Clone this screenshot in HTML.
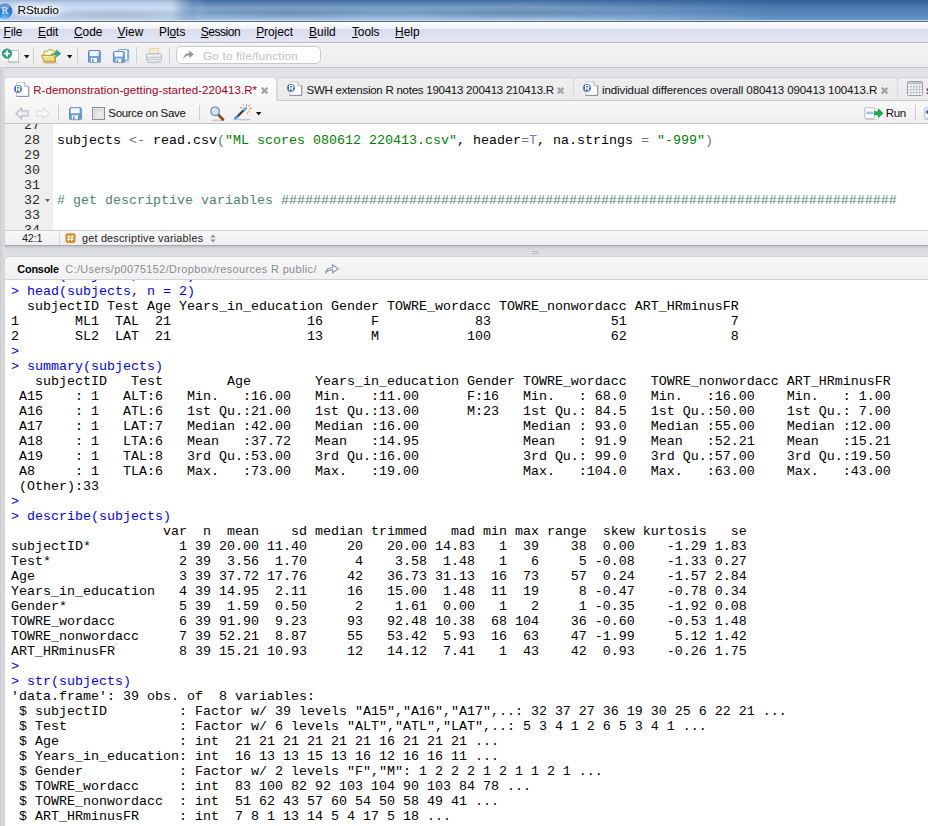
<!DOCTYPE html>
<html><head><meta charset="utf-8"><title>RStudio</title>
<style>
*{box-sizing:border-box;margin:0;padding:0}
html,body{width:928px;height:826px;overflow:hidden;background:#e2e3e7;font-family:"Liberation Sans",sans-serif;font-size:12px;color:#000}
.abs{position:absolute;white-space:nowrap}
svg{position:absolute;overflow:visible}
#title{left:0;top:0;width:928px;height:21px;overflow:hidden;background:linear-gradient(180deg,#31609a 0%,#3b6ba2 14%,#4f7fb3 42%,#5484b7 65%,#6a9bce 100%)}
#menu{left:0;top:21px;width:928px;height:22px;background:linear-gradient(180deg,#ffffff 0%,#fafbfd 12%,#eceff8 34%,#dadded 36%,#dde1f0 70%,#e3e7f4 100%);border-top:1px solid #56667b;border-bottom:1px solid #b6b9c9}
#menu u{text-decoration:underline}
#tool{left:0;top:43px;width:928px;height:25px;background:linear-gradient(180deg,#f2f2f3,#f0f0f1 50%,#ececee);border-top:1px solid #fcfcfd;border-bottom:1px solid #c3c3c5}
#search{left:176px;top:46px;width:145px;height:18px;border:1px solid #cacacd;border-radius:5px;background:#fff}
.sep{position:absolute;width:1px;background:#cfcfd1}
#tabline{left:0;top:100px;width:928px;height:1px;background:#c9c9cb}
.tab{position:absolute;top:77px;height:24px;border:1px solid #d2d2d5;border-left-color:#dbdbde;border-bottom:1px solid #c9c9cb;border-radius:4px 4px 0 0;background:linear-gradient(180deg,#eeeeef,#e9e9eb)}
.tab.act{background:linear-gradient(180deg,#fbfbfc,#f7f7f8);border-color:#dadadd;border-bottom:none;height:25px}
#etool{left:4px;top:101px;width:924px;height:23px;background:linear-gradient(180deg,#f7f7f8,#f4f4f5 60%,#efeff1);border-bottom:1px solid #c4c4c6;border-left:1px solid #d6d6d8}
#editor{left:4px;top:124px;width:924px;height:106px;background:#fff;overflow:hidden;border-left:1px solid #d6d6d8}
#gutter{left:0;top:0;width:48px;height:106px;background:#efeff0}
.mono{font-family:"Liberation Mono",monospace;font-size:13.333px;line-height:15px}
.mono div{white-space:pre}
#status{left:4px;top:230px;width:924px;height:16px;background:linear-gradient(180deg,#f8f8f9,#efeff1);border-top:1px solid #c9d2d0;border-bottom:1px solid #a9a9ab;border-left:1px solid #d0d0d2}
#split{left:5px;top:246px;width:923px;height:11px;background:linear-gradient(180deg,#bfc0c3 0%,#d4d5d8 18%,#dcdde1 40%,#dfe0e4 100%)}
#chead{left:4px;top:256px;width:924px;height:24px;background:linear-gradient(180deg,#f8f8f9,#f0f0f2);border:1px solid #d2d2d4;border-right:none;border-bottom:1px solid #d2d2d4;border-radius:5px 0 0 0}
#console{left:4px;top:280px;width:924px;height:546px;background:#fff;border-left:1px solid #d2d2d4;overflow:hidden}
#ctext{left:6px;top:-11px}
#ctext .cmd{color:#0000ff;height:15px}
#ctext .out{color:#000;height:15px}
.ln{position:absolute;left:1px;width:34px;text-align:right;color:#2a2a2a}
.code{position:absolute;left:52px}
.s{color:#008000}.c{color:#4c886b}.o{color:#687687}.k{color:#6d79de}
</style></head><body>
<svg width="0" height="0" style="left:-10px;top:-10px"><defs>
<linearGradient id="gPage" x1="0" y1="0" x2="1" y2="1"><stop offset="0" stop-color="#ffffff"/><stop offset="1" stop-color="#e9eaee"/></linearGradient>
<linearGradient id="gSave" x1="0" y1="0" x2="0" y2="1"><stop offset="0" stop-color="#78abe6"/><stop offset="1" stop-color="#6099dd"/></linearGradient>
<linearGradient id="gFold" x1="0" y1="0" x2="0" y2="1"><stop offset="0" stop-color="#fbeeb6"/><stop offset="1" stop-color="#e9c75e"/></linearGradient>
<linearGradient id="gChk" x1="0" y1="0" x2="1" y2="1"><stop offset="0" stop-color="#d4d5d6"/><stop offset="1" stop-color="#f8f8f8"/></linearGradient>
<radialGradient id="gSph" cx=".5" cy=".92" r=".95"><stop offset="0" stop-color="#62c4f4"/><stop offset=".4" stop-color="#2f83dc"/><stop offset="1" stop-color="#2b5fb4"/></radialGradient>
<g id="rdoc">
 <path d="M2.6 0.7h8.2l3.9 3.9v9.8H2.6z" fill="#fefefe" stroke="#c5c8ce" stroke-width="0.9"/>
 <path d="M14.7 4.6v9.8H2.6" fill="none" stroke="#858c98" stroke-width="1"/>
 <path d="M10.8 0.7v3.9h3.9" fill="#f3f4f7" stroke="#9a9fa9" stroke-width="0.8"/>
 <circle cx="4" cy="6.9" r="3.9" fill="#3b72b6"/>
 <path d="M2.6 9.6V4.3h1.7c1.1 0 1.7.55 1.7 1.4S5.4 7.1 4.3 7.1H2.6M4.3 7.1l1.8 2.5" fill="none" stroke="#fff" stroke-width="1.25"/>
</g>
<g id="save">
 <rect x="0.5" y="0.5" width="11.8" height="11.5" rx="1" fill="url(#gSave)" stroke="#5c88c0" stroke-width="1"/>
 <rect x="1.7" y="1.1" width="8.9" height="4.8" fill="#ffffff"/>
 <rect x="2.6" y="2.3" width="7.1" height="1.6" fill="#eef1f5"/>
 <rect x="2.8" y="8.1" width="6.2" height="3.9" fill="#ffffff"/>
 <rect x="3.9" y="9.2" width="1.8" height="2.8" fill="#5e97dc"/>
</g>
<g id="saveb">
 <rect x="0.5" y="0.5" width="10.6" height="11" rx="1" fill="#7cc0e6" stroke="#6aa6cf" stroke-width="0.9"/>
 <rect x="1.4" y="1" width="8" height="9.6" fill="#fbfdfe"/>
</g>
<g id="xx"><path d="M0.8 0.8l5.4 5.4M6.2 0.8l-5.4 5.4" stroke="#a2a2a4" stroke-width="2.2" fill="none"/></g>
<g id="dd"><path d="M0 0h5.4l-2.7 3.4z" fill="#111"/></g>
</defs></svg>
<div id="title" class="abs">
<div class="abs" style="left:180px;top:0;width:600px;height:20px;background:linear-gradient(180deg,rgba(235,243,252,.08) 0%,rgba(235,243,252,.16) 15%,rgba(235,243,252,.30) 40%,rgba(235,243,252,.24) 65%,rgba(235,243,252,.46) 100%);-webkit-mask-image:linear-gradient(90deg,transparent 0,#000 20px,#000 360px,rgba(0,0,0,.6) 450px,rgba(0,0,0,.25) 540px,transparent 600px);mask-image:linear-gradient(90deg,transparent 0,#000 20px,#000 360px,rgba(0,0,0,.6) 450px,rgba(0,0,0,.25) 540px,transparent 600px)"></div>
<div class="abs" style="left:0;top:0;width:210px;height:20px;background:linear-gradient(180deg,#9fb6d4 0%,#b9cee7 14%,#c8dcf2 35%,#c4d8ef 50%,#b9cce3 68%,#bcd1ea 100%);-webkit-mask-image:linear-gradient(90deg,#000 0,#000 172px,rgba(0,0,0,.25) 192px,transparent 208px);mask-image:linear-gradient(90deg,#000 0,#000 172px,rgba(0,0,0,.25) 192px,transparent 208px)"></div>
<div class="abs" style="left:40px;top:8px;width:150px;height:11px;background:radial-gradient(ellipse at 50% 60%,rgba(150,168,195,.45),rgba(150,168,195,0) 70%)"></div>
<div class="abs" style="left:200px;top:6px;width:180px;height:12px;background:radial-gradient(ellipse at 50% 60%,rgba(90,120,165,.35),rgba(90,120,165,0) 70%)"></div>
<div class="abs" style="left:400px;top:6px;width:240px;height:12px;background:radial-gradient(ellipse at 50% 60%,rgba(70,105,155,.35),rgba(70,105,155,0) 70%)"></div>
<div class="abs" style="left:0;top:20px;width:928px;height:1px;background:linear-gradient(90deg,#e6eef9 0,#dfeaf7 180px,#c9dbf0 300px,#c3d7ee 928px)"></div>
<div class="abs" style="left:10px;top:2px;width:60px;height:17px;background:radial-gradient(ellipse at 50% 50%,rgba(240,246,252,.85),rgba(240,246,252,0) 72%)"></div>
<svg style="left:-3px;top:3px" width="16" height="16" viewBox="0 0 16 16"><circle cx="7.7" cy="8.1" r="7.7" fill="url(#gSph)"/><ellipse cx="7.7" cy="3.9" rx="5.2" ry="2.9" fill="#ffffff" opacity=".3"/><text x="4.4" y="11.4" font-family="Liberation Serif,serif" font-size="10.2" fill="#f4f9ff">R</text></svg>
<span class="abs" style="left:17.5px;top:3px;font-size:11.8px;letter-spacing:-0.097px;color:#000;text-shadow:0 0 5px #fff,0 0 7px #fff,0 0 9px rgba(255,255,255,.9);">RStudio</span>
</div>
<div id="menu" class="abs">
<span class="abs" style="left:3.5px;top:3px;font-size:11.9px;letter-spacing:-0.094px"><u>F</u>ile</span>
<span class="abs" style="left:38px;top:3px;font-size:11.9px;letter-spacing:-0.052px"><u>E</u>dit</span>
<span class="abs" style="left:74px;top:3px;font-size:11.9px;letter-spacing:-0.037px"><u>C</u>ode</span>
<span class="abs" style="left:117.5px;top:3px;font-size:11.9px;letter-spacing:0.055px"><u>V</u>iew</span>
<span class="abs" style="left:159px;top:3px;font-size:11.9px;letter-spacing:-0.031px">Pl<u>o</u>ts</span>
<span class="abs" style="left:200.8px;top:3px;font-size:11.9px;letter-spacing:-0.405px"><u>S</u>ession</span>
<span class="abs" style="left:256.2px;top:3px;font-size:11.9px;letter-spacing:-0.034px"><u>P</u>roject</span>
<span class="abs" style="left:309px;top:3px;font-size:11.9px;letter-spacing:0.067px"><u>B</u>uild</span>
<span class="abs" style="left:352px;top:3px;font-size:11.9px;letter-spacing:-0.096px"><u>T</u>ools</span>
<span class="abs" style="left:395px;top:3px;font-size:11.9px;letter-spacing:0.081px"><u>H</u>elp</span>
</div>
<div id="tool" class="abs"></div>
<svg style="left:2px;top:48px" width="18" height="16" viewBox="0 0 18 16"><ellipse cx="11.5" cy="14.4" rx="7" ry="0.9" fill="#c9cdd5"/><path d="M6.5 2.5h10v11.3h-10z" fill="#fdfdfe" stroke="#bcc2cd" stroke-width="1"/><circle cx="5" cy="5.6" r="4.7" fill="#1fa878" stroke="#158a62" stroke-width="0.6"/><path d="M5 2.6v6M2 5.6h6" stroke="#fff" stroke-width="1.9"/></svg>
<svg style="left:24px;top:54.5px" width="5.4" height="3.5" viewBox="0 0 5.4 3.4"><use href="#dd"/></svg>
<div class="sep" style="left:33px;top:47px;height:16px"></div>
<svg style="left:41px;top:49px" width="21" height="15" viewBox="0 0 21 15"><ellipse cx="9.5" cy="14.1" rx="8" ry="0.9" fill="#cfcfd3"/><path d="M2.9 12.8V3q0-.9.9-.9h2.4l1.3-1.3h3.6l1.2 1.3h1.3q.9 0 .9.9v9.8z" fill="#fbf3cf" stroke="#c39a2c" stroke-width="1"/><path d="M0.7 6.4h11.2q.7 0 .9.6l1.8 5.8H3.6q-.7 0-.9-.6z" fill="url(#gFold)" stroke="#c39a2c" stroke-width="1"/><path d="M9.6 6.6C10.8 4.6 12.8 3.7 15.2 3.7V.8l4.8 3.7-4.8 3.7V5.5c-2.2-.1-4.2.2-5.6 1.1z" fill="#22ae88" stroke="#17976f" stroke-width="0.4"/></svg>
<svg style="left:66.9px;top:54.5px" width="5.4" height="3.5" viewBox="0 0 5.4 3.4"><use href="#dd"/></svg>
<div class="sep" style="left:77px;top:47px;height:16px"></div>
<svg style="left:88.2px;top:49.9px" width="13" height="12.5" viewBox="0 0 13 12.5"><ellipse cx="6.5" cy="12.4" rx="7.5" ry="0.9" fill="#cfcfd2"/><use href="#save"/></svg>
<svg style="left:113px;top:49px" width="17" height="14" viewBox="0 0 17 14"><ellipse cx="8.5" cy="13.3" rx="9" ry="0.9" fill="#cfcfd2"/><g transform="translate(4.6,0)"><use href="#saveb"/></g><g transform="translate(0,2.1) scale(.92)"><use href="#save"/></g></svg>
<div class="sep" style="left:136px;top:47px;height:16px"></div>
<svg style="left:146px;top:48px" width="16" height="15" viewBox="0 0 16 15"><ellipse cx="8" cy="14.4" rx="8" ry="0.8" fill="#d2d2d5"/><rect x="3.6" y="0.5" width="8.8" height="7" fill="#f8ebc4" stroke="#e6d5a3" stroke-width="0.8"/><rect x="0.5" y="5.8" width="15" height="6.4" rx="1.6" fill="#eef0f5" stroke="#a9afbd" stroke-width="1"/><rect x="1.2" y="8.8" width="13.6" height="1" fill="#b7bdcb"/><rect x="2.6" y="11.6" width="10.8" height="2.4" rx=".6" fill="#f5f6f9" stroke="#adb3c0" stroke-width="0.8"/></svg>
<div class="sep" style="left:169px;top:47px;height:16px"></div>
<div id="search" class="abs"></div>
<svg style="left:183px;top:50px" width="11" height="10" viewBox="0 0 11 10"><path d="M0.3 9.4C.6 5 2.8 3.2 6.2 3.2V.4l4.6 3.9-4.6 3.9V5.6C3.4 5.5 1.6 6.6.3 9.4z" fill="#9398a6"/></svg>
<span class="abs" style="left:203.0px;top:49px;font-size:11.6px;letter-spacing:0.249px;color:#c1c1c5;">Go to file/function</span>
<div class="abs" style="left:0;top:68px;width:928px;height:4px;background:linear-gradient(180deg,#dbdce0,#e2e3e7)"></div>
<div class="abs" style="left:0;top:67px;width:5px;height:759px;background:linear-gradient(90deg,#cdced2,#dfe0e4)"></div>
<div id="tabline" class="abs"></div>
<div class="tab" style="left:277px;width:297px"></div>
<div class="tab" style="left:573px;width:325px"></div>
<div class="tab" style="left:897px;width:40px"></div>
<div class="tab act" style="left:4px;width:273px"></div>
<svg style="left:14px;top:82px" width="16" height="15" viewBox="0 0 16 15"><use href="#rdoc"/></svg>
<span class="abs" style="left:33.2px;top:84px;font-size:11.5px;letter-spacing:0.084px;color:#a80019;">R-demonstration-getting-started-220413.R*</span>
<svg style="left:261px;top:86.9px" width="7.2" height="7.2" viewBox="0 0 7 7"><use href="#xx"/></svg>
<svg style="left:287.2px;top:81.3px" width="16" height="15" viewBox="0 0 16 15"><use href="#rdoc"/></svg>
<span class="abs" style="left:306.5px;top:84px;font-size:11.5px;letter-spacing:-0.250px;color:#111;">SWH extension R notes 190413 200413 210413.R</span>
<svg style="left:557.4px;top:86.9px" width="7.2" height="7.2" viewBox="0 0 7 7"><use href="#xx"/></svg>
<svg style="left:583px;top:81.3px" width="16" height="15" viewBox="0 0 16 15"><use href="#rdoc"/></svg>
<span class="abs" style="left:602.0px;top:84px;font-size:11.5px;letter-spacing:-0.100px;color:#111;">individual differences overall 080413 090413 100413.R</span>
<svg style="left:881.2px;top:86.9px" width="7.2" height="7.2" viewBox="0 0 7 7"><use href="#xx"/></svg>
<svg style="left:907px;top:81px" width="16" height="15" viewBox="0 0 16 15"><rect x="0.5" y="0.5" width="15" height="14" rx="1" fill="#fdfdfe" stroke="#9a9ea7"/><rect x="1" y="1" width="14" height="2.2" fill="#bfc3cb"/><path d="M1 5.9h14M1 8.7h14M1 11.5h14M3.9 3.2v11M6.8 3.2v11M9.7 3.2v11M12.6 3.2v11" stroke="#bcc0c9" stroke-width="0.9"/></svg>
<span class="abs" style="left:926.0px;top:84px;font-size:11.5px;letter-spacing:0.250px;color:#111;">s</span>
<div id="etool" class="abs"></div>
<svg style="left:15px;top:107px" width="14" height="13" viewBox="0 0 14 13"><path d="M6.6 0.8L0.8 6.4l5.8 5.6V8.9h6.6V3.9H6.6z" fill="#eceef1" stroke="#b7bbc2" stroke-width="1.1"/></svg>
<svg style="left:36px;top:107px" width="14" height="13" viewBox="0 0 14 13"><path d="M7.4 0.8l5.8 5.6-5.8 5.6V8.9H0.8V3.9h6.6z" fill="#f9f9fa" stroke="#dcdde0" stroke-width="1.1"/></svg>
<div class="sep" style="left:58px;top:105px;height:15px"></div>
<svg style="left:69.4px;top:107px" width="13" height="13" viewBox="0 0 13 12.5"><ellipse cx="6.5" cy="12.4" rx="7.5" ry="0.9" fill="#cfcfd2"/><use href="#save"/></svg>
<svg style="left:92px;top:107px" width="13" height="13" viewBox="0 0 13 13"><rect x="0.5" y="0.5" width="12" height="12" fill="#f4f4f4" stroke="#8e8f91"/><rect x="2" y="2" width="9" height="9" fill="url(#gChk)" stroke="#c2c3c5" stroke-width="0.6"/></svg>
<span class="abs" style="left:108.3px;top:107px;font-size:11.5px;letter-spacing:-0.331px;color:#111;">Source on Save</span>
<div class="sep" style="left:199px;top:105px;height:15px"></div>
<svg style="left:209px;top:105.6px" width="17" height="16" viewBox="0 0 17 16"><ellipse cx="8.5" cy="14.4" rx="6.5" ry="0.8" fill="#c9cbd0"/><path d="M9.4 8.9l4.6 4.6" stroke="#8a4a1c" stroke-width="2.7" stroke-linecap="round"/><circle cx="6.1" cy="5.3" r="4.3" fill="#cfe2f7" stroke="#6f88ab" stroke-width="1.25"/><path d="M3.5 4.6a3 3 0 0 1 3-2.2" stroke="#fff" stroke-width="1.2" fill="none"/></svg>
<svg style="left:234px;top:103px" width="19" height="18" viewBox="0 0 19 18"><ellipse cx="9.5" cy="16.6" rx="7.5" ry="0.9" fill="#c3c5cc"/><path d="M1.6 15.2L11.8 5.2" stroke="#2b2e35" stroke-width="2.3" stroke-linecap="butt"/><path d="M2.6 14.9L11 6.7" stroke="#7d828c" stroke-width="0.6"/><path d="M1.2 15.6l2-2" stroke="#3f9be0" stroke-width="2.4" stroke-linecap="round"/><path d="M10.2 6.8l1.8-1.8" stroke="#5aaee8" stroke-width="2.4" stroke-linecap="round"/><path d="M12.6 0.9v2.2M14.3 3.6l1.9-2M15.2 5.4h2.8M14.6 7.8l1.8 1.6M13.6 9.3v1.8M8.6 1.1l1.6 1.6M6 4.6h2.2" stroke="#f5853f" stroke-width="1"/></svg>
<svg style="left:256px;top:112px" width="5.4" height="3.4" viewBox="0 0 5.4 3.4"><use href="#dd"/></svg>
<svg style="left:864px;top:106.5px" width="20" height="13" viewBox="0 0 20 13"><ellipse cx="7" cy="12.4" rx="7.5" ry="0.7" fill="#cfcfd2"/><rect x="0.7" y="0.7" width="10" height="10.8" rx="1.2" fill="#fdfdfe" stroke="#b5b8bf" stroke-width="0.9"/><rect x="2.2" y="4.6" width="7" height="2.6" fill="#9dbef0"/><path d="M10.2 4.6h4V1.6l5 4.7-5 4.7V8h-4z" fill="#1fa84f" stroke="#168a3f" stroke-width="0.4"/></svg>
<span class="abs" style="left:885.8px;top:107px;font-size:11.5px;letter-spacing:-0.432px;color:#111;">Run</span>
<div class="sep" style="left:915px;top:105px;height:15px"></div>
<svg style="left:924px;top:106.5px" width="8" height="13" viewBox="0 0 8 13"><ellipse cx="5" cy="12.2" rx="6" ry="0.7" fill="#cfcfd2"/><rect x="0.7" y="0.7" width="10" height="10.8" rx="1.2" fill="#fdfdfe" stroke="#b5b8bf" stroke-width="0.9"/><path d="M4 3.2L2.2 5l1.8 1.8M2.4 5h3" stroke="#2f6fd0" stroke-width="1.3" fill="none"/></svg>
<div id="editor" class="abs"><div id="gutter" class="abs"></div><div class="mono">
<div class="ln" style="top:-6px">27</div>
<div class="ln" style="top:9px">28</div>
<div class="ln" style="top:24px">29</div>
<div class="ln" style="top:39px">30</div>
<div class="ln" style="top:54px">31</div>
<div class="ln" style="top:69px">32</div>
<div class="ln" style="top:84px">33</div>
<div class="ln" style="top:99px">34</div>
<div class="code" style="top:9px">subjects <span class="o">&lt;-</span> read.csv<span class="o">(</span><span class="s">"ML scores 080612 220413.csv"</span>, header<span class="o">=</span><span class="k">T</span>, na.strings <span class="o">=</span> <span class="s">"-999"</span><span class="o">)</span></div>
<div class="code c" style="top:69px"># get descriptive variables #############################################################################</div>
</div>
<svg style="left:40px;top:74.8px" width="5" height="3.4" viewBox="0 0 5.4 3.4"><path d="M0 0h5.4l-2.7 3.4z" fill="#666"/></svg>
</div>
<div id="status" class="abs"></div>
<span class="abs" style="left:22.0px;top:232px;font-size:10.8px;letter-spacing:-0.180px;color:#222;">42:1</span>
<div class="sep" style="left:59px;top:231px;height:14px;background:#d9d9db"></div>
<svg style="left:65px;top:233px" width="11" height="10.6" viewBox="0 0 10 10"><rect x="0.2" y="0.2" width="9.6" height="9.2" rx="2" fill="#d39229"/><path d="M3.7 1.8l-.7 6M6.7 1.8l-.7 6M1.8 3.8h6.4M1.6 6h6.4" stroke="#fff" stroke-width="0.9"/></svg>
<span class="abs" style="left:82.0px;top:232px;font-size:10.8px;letter-spacing:0.218px;color:#222;">get descriptive variables</span>
<svg style="left:209.5px;top:234px" width="6" height="9" viewBox="0 0 6 9"><path d="M0.4 3.4L3 0.4l2.6 3zM0.4 5.4L3 8.4l2.6-3z" fill="#8d8d90"/></svg>
<div id="split" class="abs"></div>
<div class="abs" style="left:532px;top:250.5px;width:7px;height:1px;background:#b9babd"></div><div class="abs" style="left:532px;top:252.5px;width:7px;height:1px;background:#b9babd"></div>
<div id="chead" class="abs"></div>
<span class="abs" style="left:17.3px;top:262.5px;font-size:10.9px;letter-spacing:-0.214px;color:#000;font-weight:bold;">Console</span>
<span class="abs" style="left:65.3px;top:262.5px;font-size:10.9px;letter-spacing:0.383px;color:#8b8b8e;">C:/Users/p0075152/Dropbox/resources R public/</span>
<svg style="left:325px;top:264px" width="14" height="10" viewBox="0 0 14 10"><path d="M0.6 9.4C.9 5.6 3.4 3.6 7.6 3.6V.8l5.6 4-5.6 4V6C4.4 5.9 2 6.8.6 9.4z" fill="#fbfbfc" stroke="#959dae" stroke-width="1.25"/></svg>
<div id="console" class="abs"><div id="ctext" class="abs mono">
<div class="cmd" style="position:relative;top:-1px">&gt; head(subjects, n = 2)</div>
<div class="cmd">&gt; head(subjects, n = 2)</div>
<div class="out">  subjectID Test Age Years_in_education Gender TOWRE_wordacc TOWRE_nonwordacc ART_HRminusFR</div>
<div class="out">1       ML1  TAL  21                 16      F            83               51             7</div>
<div class="out">2       SL2  LAT  21                 13      M           100               62             8</div>
<div class="cmd">&gt; </div>
<div class="cmd">&gt; summary(subjects)</div>
<div class="out">   subjectID   Test        Age        Years_in_education Gender TOWRE_wordacc   TOWRE_nonwordacc ART_HRminusFR</div>
<div class="out"> A15    : 1   ALT:6   Min.   :16.00   Min.   :11.00      F:16   Min.   : 68.0   Min.   :16.00    Min.   : 1.00</div>
<div class="out"> A16    : 1   ATL:6   1st Qu.:21.00   1st Qu.:13.00      M:23   1st Qu.: 84.5   1st Qu.:50.00    1st Qu.: 7.00</div>
<div class="out"> A17    : 1   LAT:7   Median :42.00   Median :16.00             Median : 93.0   Median :55.00    Median :12.00</div>
<div class="out"> A18    : 1   LTA:6   Mean   :37.72   Mean   :14.95             Mean   : 91.9   Mean   :52.21    Mean   :15.21</div>
<div class="out"> A19    : 1   TAL:8   3rd Qu.:53.00   3rd Qu.:16.00             3rd Qu.: 99.0   3rd Qu.:57.00    3rd Qu.:19.50</div>
<div class="out"> A8     : 1   TLA:6   Max.   :73.00   Max.   :19.00             Max.   :104.0   Max.   :63.00    Max.   :43.00</div>
<div class="out"> (Other):33</div>
<div class="cmd">&gt; </div>
<div class="cmd">&gt; describe(subjects)</div>
<div class="out">                   var  n  mean    sd median trimmed   mad min max range  skew kurtosis   se</div>
<div class="out">subjectID*           1 39 20.00 11.40     20   20.00 14.83   1  39    38  0.00    -1.29 1.83</div>
<div class="out">Test*                2 39  3.56  1.70      4    3.58  1.48   1   6     5 -0.08    -1.33 0.27</div>
<div class="out">Age                  3 39 37.72 17.76     42   36.73 31.13  16  73    57  0.24    -1.57 2.84</div>
<div class="out">Years_in_education   4 39 14.95  2.11     16   15.00  1.48  11  19     8 -0.47    -0.78 0.34</div>
<div class="out">Gender*              5 39  1.59  0.50      2    1.61  0.00   1   2     1 -0.35    -1.92 0.08</div>
<div class="out">TOWRE_wordacc        6 39 91.90  9.23     93   92.48 10.38  68 104    36 -0.60    -0.53 1.48</div>
<div class="out">TOWRE_nonwordacc     7 39 52.21  8.87     55   53.42  5.93  16  63    47 -1.99     5.12 1.42</div>
<div class="out">ART_HRminusFR        8 39 15.21 10.93     12   14.12  7.41   1  43    42  0.93    -0.26 1.75</div>
<div class="cmd">&gt; </div>
<div class="cmd">&gt; str(subjects)</div>
<div class="out">'data.frame': 39 obs. of  8 variables:</div>
<div class="out"> $ subjectID         : Factor w/ 39 levels "A15","A16","A17",..: 32 37 27 36 19 30 25 6 22 21 ...</div>
<div class="out"> $ Test              : Factor w/ 6 levels "ALT","ATL","LAT",..: 5 3 4 1 2 6 5 3 4 1 ...</div>
<div class="out"> $ Age               : int  21 21 21 21 21 21 16 21 21 21 ...</div>
<div class="out"> $ Years_in_education: int  16 13 13 15 13 16 12 16 16 11 ...</div>
<div class="out"> $ Gender            : Factor w/ 2 levels "F","M": 1 2 2 2 1 2 1 1 2 1 ...</div>
<div class="out"> $ TOWRE_wordacc     : int  83 100 82 92 103 104 90 103 84 78 ...</div>
<div class="out"> $ TOWRE_nonwordacc  : int  51 62 43 57 60 54 50 58 49 41 ...</div>
<div class="out"> $ ART_HRminusFR     : int  7 8 1 13 14 5 4 17 5 18 ...</div>
</div></div>
</body></html>
